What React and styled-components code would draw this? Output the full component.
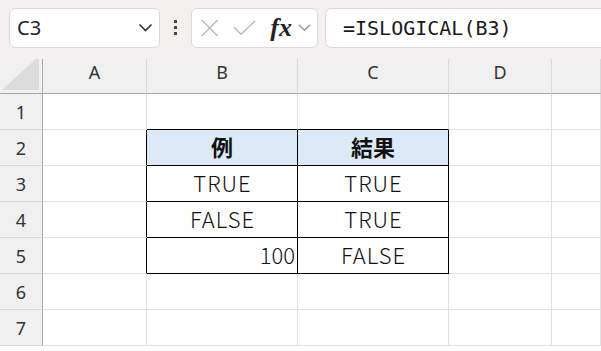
import React from "react";
import styled, { createGlobalStyle } from "styled-components";

const Global = createGlobalStyle`
  html, body { margin: 0; padding: 0; background: #ffffff; }
  body { width: 601px; height: 351px; overflow: hidden; }
`;

const cols = ["A", "B", "C", "D", ""];
const rows = [
  ["", "", "", "", ""],
  ["", "例", "結果", "", ""],
  ["", "TRUE", "TRUE", "", ""],
  ["", "FALSE", "TRUE", "", ""],
  ["", "100", "FALSE", "", ""],
  ["", "", "", "", ""],
  ["", "", "", "", ""],
];

const Page = styled.div`
  width: 601px;
  height: 351px;
  display: flex;
  flex-direction: column;
  font-family: "Noto Sans CJK JP", "Noto Sans", sans-serif;
`;

const Toolbar = styled.div`
  height: 59px;
  background: #f3f1ef;
  display: flex;
  align-items: center;
  padding: 0 0 4px 9px;
  box-sizing: border-box;
`;

const Box = styled.div`
  height: 40px;
  box-sizing: border-box;
  background: #ffffff;
  border: 1px solid #dcdad8;
  border-radius: 6px;
  display: flex;
  align-items: center;
`;

const NameBox = styled(Box)`
  width: 151px;
  padding: 0 6px 0 7px;
  justify-content: space-between;
  font-family: "Noto Sans", sans-serif;
  font-size: 20px;
  color: #222;
`;

const FxBox = styled(Box)`
  width: 127px;
  margin-left: 31px;
  padding: 0 6px 0 8px;
  gap: 14px;
`;

const FormulaBox = styled(Box)`
  flex: 1;
  margin-left: 7px;
  border-right: none;
  border-radius: 6px 0 0 6px;
  padding-left: 17px;
  font-family: "DejaVu Sans Mono", monospace;
  font-size: 20px;
  color: #1a1a1a;
`;

const Dots = styled.div`
  position: relative;
  width: 0;
  display: flex;
  flex-direction: column;
  gap: 3px;
  left: 14px;
  span {
    width: 3px;
    height: 3px;
    background: #444;
  }
`;

const Fx = styled.span`
  font-family: "Liberation Serif", serif;
  font-style: italic;
  font-weight: bold;
  font-size: 26px;
  color: #222;
  display: flex;
  align-items: center;
  gap: 6px;
`;

const Grid = styled.div`
  display: grid;
  grid-template-columns: 43px 104px 151px 151px 103px 1fr;
  grid-template-rows: 35px repeat(7, 36px);
  flex: 1;
  overflow: hidden;
`;

const Head = styled.div`
  background: #f0f0f0;
  box-sizing: border-box;
  border-right: 1px solid ${(p) => p.$rc || "#d8d8d8"};
  border-bottom: 1px solid ${(p) => p.$bc || "#d8d8d8"};
  display: flex;
  align-items: center;
  justify-content: center;
  padding-bottom: ${(p) => (p.$top ? "8px" : "0")};
  font-family: "Noto Sans", sans-serif;
  font-size: 18px;
  color: #333;
`;

const Corner = styled(Head)`
  align-items: flex-end;
  justify-content: flex-end;
  padding: 0 3px 3px 0;
`;

const Cell = styled.div`
  box-sizing: border-box;
  background: ${(p) => (p.$head ? "#dce9f6" : "#ffffff")};
  border-right: 1px solid ${(p) => p.$rc || "#e1e1e1"};
  border-bottom: 1px solid ${(p) => p.$bc || "#e1e1e1"};
  display: flex;
  align-items: center;
  justify-content: ${(p) => (p.$num ? "flex-end" : "center")};
  padding: 0 ${(p) => (p.$num ? "2px" : "0")} 3px 0;
  font-family: "Noto Sans CJK JP", sans-serif;
  font-size: 22px;
  letter-spacing: ${(p) => (p.$head || p.$num ? "0" : "1px")};
  text-indent: ${(p) => (p.$head || p.$num ? "0" : "1px")};
  font-weight: ${(p) => (p.$head ? 700 : 300)};
  color: #111;
`;

const X = () => (
  <svg width="22" height="22" viewBox="0 0 22 22">
    <path d="M2 2L20 20M20 2L2 20" stroke="#b8b8b8" strokeWidth="1.6" fill="none" />
  </svg>
);
const Check = () => (
  <svg width="26" height="20" viewBox="0 0 26 20">
    <path d="M1 9L9 17L25 2" stroke="#b8b8b8" strokeWidth="1.6" fill="none" />
  </svg>
);
const Chevron = ({ color = "#333", w = 15 }) => (
  <svg width={w} height="9" viewBox="0 0 14 9">
    <path d="M1 1.5L7 7.5L13 1.5" stroke={color} strokeWidth="1.6" fill="none" />
  </svg>
);

export default function App() {
  const inTable = (r, c) => r >= 1 && r <= 4 && (c === 1 || c === 2);
  return (
    <Page>
      <Global />
      <Toolbar>
        <NameBox>
          C3
          <Chevron />
        </NameBox>
        <Dots>
          <span />
          <span />
          <span />
        </Dots>
        <FxBox>
          <X />
          <Check />
          <Fx>
            fx
            <Chevron color="#999" w={13} />
          </Fx>
        </FxBox>
        <FormulaBox>=ISLOGICAL(B3)</FormulaBox>
      </Toolbar>
      <Grid>
        <Corner $rc="#a8a8a8" $bc="#a8a8a8">
          <svg width="37" height="34" viewBox="0 0 37 34">
            <path d="M37 0V34H0Z" fill="#dcdcdc" />
          </svg>
        </Corner>
        {cols.map((c, i) => (
          <Head key={c + i} $bc="#a8a8a8" $top>
            {c}
          </Head>
        ))}
        {rows.map((row, r) => (
          <React.Fragment key={r}>
            <Head $rc="#a8a8a8">{r + 1}</Head>
            {row.map((v, c) => {
              const t = inTable(r, c);
              const below = inTable(r + 1, c);
              const right = inTable(r, c + 1);
              return (
                <Cell
                  key={c}
                  $head={r === 1 && t}
                  $num={v === "100"}
                  $rc={t || right ? "#000" : undefined}
                  $bc={t || below ? "#000" : undefined}
                >
                  {v}
                </Cell>
              );
            })}
          </React.Fragment>
        ))}
      </Grid>
    </Page>
  );
}
